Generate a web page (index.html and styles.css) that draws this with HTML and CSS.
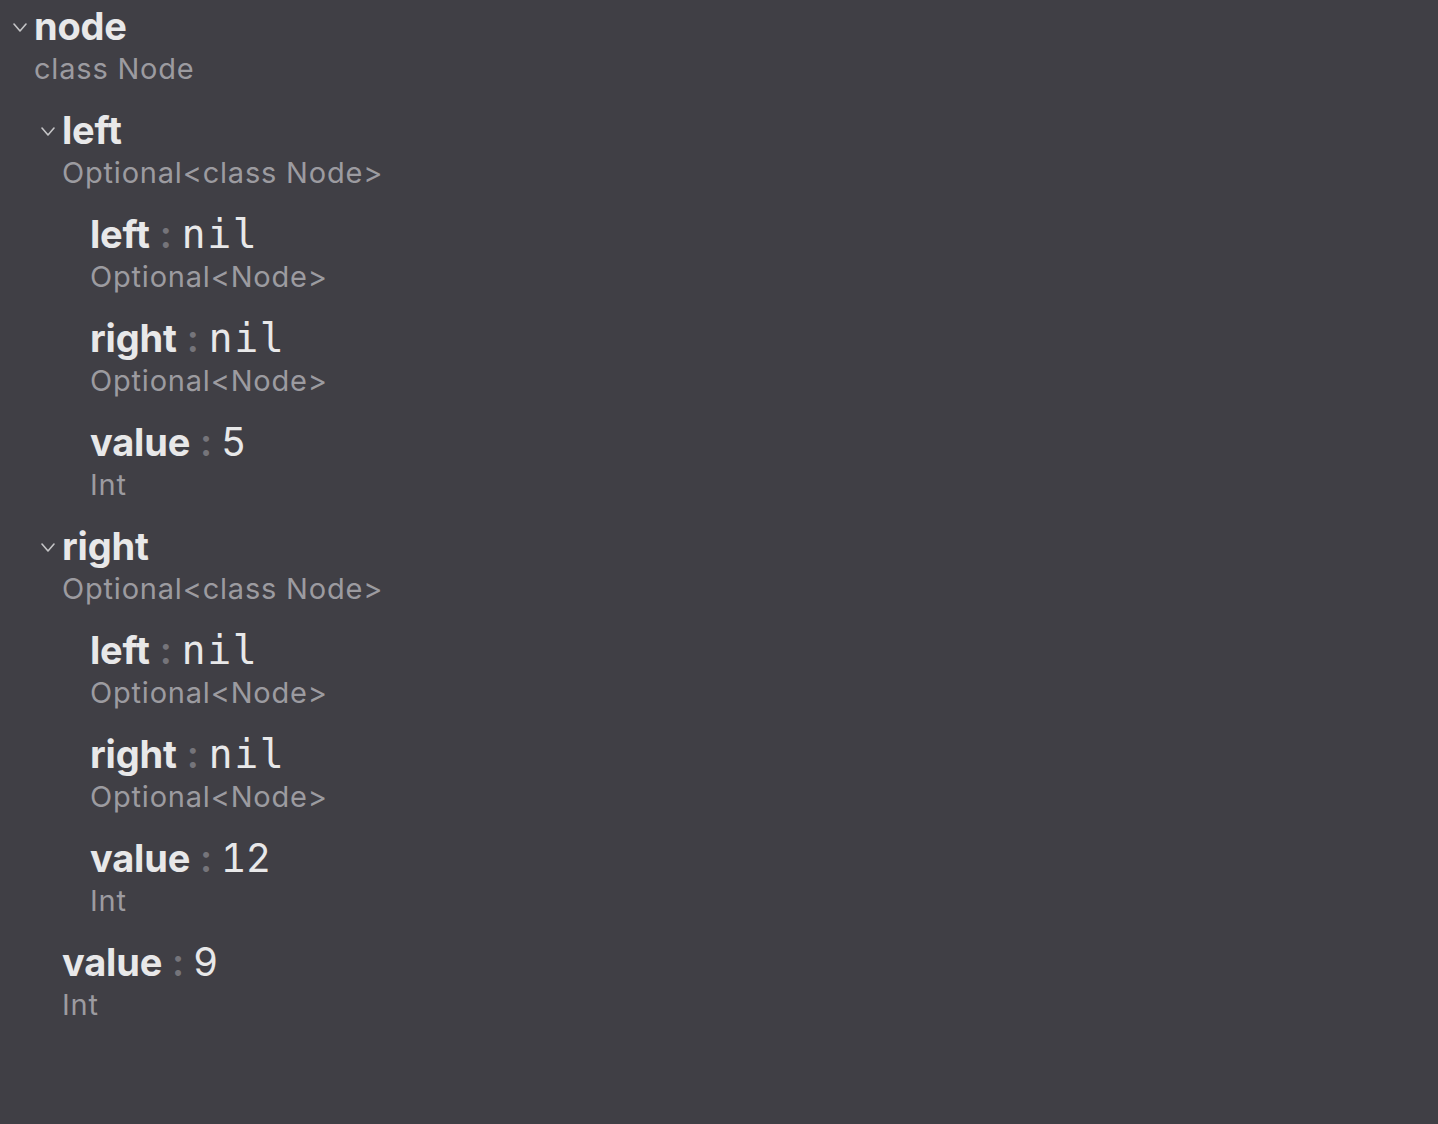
FILE: index.html
```html
<!DOCTYPE html>
<html>
<head>
<meta charset="utf-8">
<link rel="stylesheet" href="styles.css">
</head>
<body>
<div class="tree">
  <div class="node">
    <div class="toggle"><svg class="chev" viewBox="0 0 14 9" width="14" height="9"><polyline points="1,1 7,8 13,1"/></svg></div>
    <div class="content">
      <div class="name">node</div>
      <div class="type">class Node</div>
      <div class="children">
        <div class="node">
          <div class="toggle"><svg class="chev" viewBox="0 0 14 9" width="14" height="9"><polyline points="1,1 7,8 13,1"/></svg></div>
          <div class="content">
            <div class="name">left</div>
            <div class="type">Optional&lt;class Node&gt;</div>
            <div class="children">
              <div class="node">
                <div class="toggle"></div>
                <div class="content">
                  <div class="name">left<span class="colon">:</span><span class="mono">nil</span></div>
                  <div class="type">Optional&lt;Node&gt;</div>
                </div>
              </div>
              <div class="node">
                <div class="toggle"></div>
                <div class="content">
                  <div class="name">right<span class="colon">:</span><span class="mono">nil</span></div>
                  <div class="type">Optional&lt;Node&gt;</div>
                </div>
              </div>
              <div class="node">
                <div class="toggle"></div>
                <div class="content">
                  <div class="name">value<span class="colon">:</span><span class="val">5</span></div>
                  <div class="type">Int</div>
                </div>
              </div>
            </div>
          </div>
        </div>
        <div class="node">
          <div class="toggle"><svg class="chev" viewBox="0 0 14 9" width="14" height="9"><polyline points="1,1 7,8 13,1"/></svg></div>
          <div class="content">
            <div class="name">right</div>
            <div class="type">Optional&lt;class Node&gt;</div>
            <div class="children">
              <div class="node">
                <div class="toggle"></div>
                <div class="content">
                  <div class="name">left<span class="colon">:</span><span class="mono">nil</span></div>
                  <div class="type">Optional&lt;Node&gt;</div>
                </div>
              </div>
              <div class="node">
                <div class="toggle"></div>
                <div class="content">
                  <div class="name">right<span class="colon">:</span><span class="mono">nil</span></div>
                  <div class="type">Optional&lt;Node&gt;</div>
                </div>
              </div>
              <div class="node">
                <div class="toggle"></div>
                <div class="content">
                  <div class="name">value<span class="colon">:</span><span class="val">12</span></div>
                  <div class="type">Int</div>
                </div>
              </div>
            </div>
          </div>
        </div>
        <div class="node">
          <div class="toggle"></div>
          <div class="content">
            <div class="name">value<span class="colon">:</span><span class="val">9</span></div>
            <div class="type">Int</div>
          </div>
        </div>
      </div>
    </div>
  </div>
</div>
</body>
</html>
```
FILE: styles.css
```css
html, body {
  margin: 0;
  padding: 0;
  background: #403f45;
  height: 100%;
}
body {
  font-family: Inter, "Liberation Sans", sans-serif;
}
.tree {
  padding: 2px 0 0 6px;
}
.node {
  display: grid;
  grid-template-columns: 28px 1fr;
}
.toggle {
  height: 48px;
}
.chev {
  display: block;
  margin: 21px 0 0 7px;
  fill: none;
  stroke: #c4c4c6;
  stroke-width: 1.6;
  stroke-linecap: round;
  stroke-linejoin: round;
}
.content {
  display: flex;
  flex-direction: column;
}
.name {
  font-size: 38px;
  height: 48px;
  line-height: 48px;
  font-weight: 700;
  color: #e8e8e9;
  letter-spacing: -0.2px;
  white-space: nowrap;
}
.colon {
  color: #75747a;
  font-weight: 600;
  margin: 0 9px 0 10px;
  line-height: 1;
}
.mono {
  font-family: "DejaVu Sans Mono", "Liberation Mono", monospace;
  font-weight: 400;
  font-size: 40px;
  letter-spacing: 1.5px;
  line-height: 1;
  margin-left: 1px;
  color: #e8e8e9;
}
.val {
  font-weight: 400;
  font-size: 39px;
  letter-spacing: -0.5px;
  font-variant-numeric: tabular-nums;
  line-height: 1;
  color: #e8e8e9;
}
.type {
  font-size: 29px;
  line-height: 38px;
  letter-spacing: 0.8px;
  color: #9c9ba0;
  margin-bottom: 18px;
  white-space: nowrap;
}
.children {
  display: flex;
  flex-direction: column;
}
```
